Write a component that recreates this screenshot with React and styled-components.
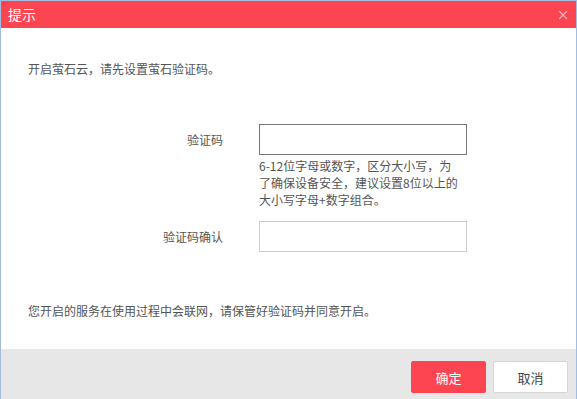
import React from 'react'
import styled, { createGlobalStyle } from 'styled-components'

const GlobalStyle = createGlobalStyle`
  html, body {
    margin: 0;
    padding: 0;
    background: #fff;
  }
  body {
    font-family: "Microsoft YaHei", "Noto Sans CJK SC", "Noto Sans", sans-serif;
  }
`

const Dialog = styled.div`
  width: 577px;
  height: 399px;
  box-sizing: border-box;
  border: 1px solid #a3bde0;
  border-bottom: none;
  display: flex;
  flex-direction: column;
  overflow: hidden;
`

const Header = styled.div`
  height: 27px;
  flex: none;
  background: #fd4451;
  display: flex;
  align-items: center;
  justify-content: space-between;
  padding: 0 9px 0 8px;
  margin: 0 -1px;
`

const Title = styled.span`
  color: #fff;
  font-size: 14px;
  line-height: 27px;
`

const Close = styled.button`
  border: none;
  background: none;
  padding: 0;
  width: 10px;
  height: 10px;
  display: flex;
  cursor: pointer;
`

const Body = styled.div`
  flex: 1;
  padding: 32px 27px 0;
  color: #555;
  font-size: 12px;
`

const Text = styled.p`
  margin: 0;
  line-height: 18px;
  margin-top: ${(p) => p.top || 0}px;
  white-space: nowrap;
`

const Form = styled.div`
  display: grid;
  grid-template-columns: 195px 208px;
  column-gap: 36px;
  margin-top: 46px;
`

const Label = styled.label`
  text-align: right;
  line-height: 31px;
  color: #555;
`

const Input = styled.input`
  box-sizing: border-box;
  width: 208px;
  height: 31px;
  border: 1px solid ${(p) => (p.focused ? '#777' : '#ccc')};
  outline: none;
  padding: 0 8px;
  margin: 0;
  font: inherit;
`

const Hint = styled.div`
  grid-column: 2;
  margin: 2px 0 13px;
  line-height: 17px;
  white-space: nowrap;
  color: #555;
`

const Footer = styled.div`
  height: 50px;
  flex: none;
  background: #e7e7e7;
  display: flex;
  justify-content: flex-end;
  align-items: flex-start;
  gap: 7px;
  padding: 12px 8px 0 0;
  box-sizing: border-box;
`

const Button = styled.button`
  width: 75px;
  height: 32px;
  box-sizing: border-box;
  border-radius: 2px;
  font: inherit;
  font-size: 13px;
  cursor: pointer;
  border: 1px solid ${(p) => (p.primary ? '#fd4451' : '#d6d6d6')};
  background: ${(p) => (p.primary ? '#fd4451' : '#fff')};
  color: ${(p) => (p.primary ? '#fff' : '#444')};
`

export default function App() {
  return (
    <>
      <GlobalStyle />
      <Dialog>
        <Header>
          <Title>提示</Title>
          <Close aria-label="close">
            <svg width="10" height="10" viewBox="0 0 10 10">
              <path d="M1 1L9 9M9 1L1 9" stroke="rgba(255,255,255,0.6)" strokeWidth="1.2" />
            </svg>
          </Close>
        </Header>
        <Body>
          <Text>开启萤石云，请先设置萤石验证码。</Text>
          <Form>
            <Label>验证码</Label>
            <Input type="password" focused />
            <Hint>
              6-12位字母或数字，区分大小写，为
              <br />
              了确保设备安全，建议设置8位以上的
              <br />
              大小写字母+数字组合。
            </Hint>
            <Label>验证码确认</Label>
            <Input type="password" />
          </Form>
          <Text top={50}>您开启的服务在使用过程中会联网，请保管好验证码并同意开启。</Text>
        </Body>
        <Footer>
          <Button primary>确定</Button>
          <Button>取消</Button>
        </Footer>
      </Dialog>
    </>
  )
}
